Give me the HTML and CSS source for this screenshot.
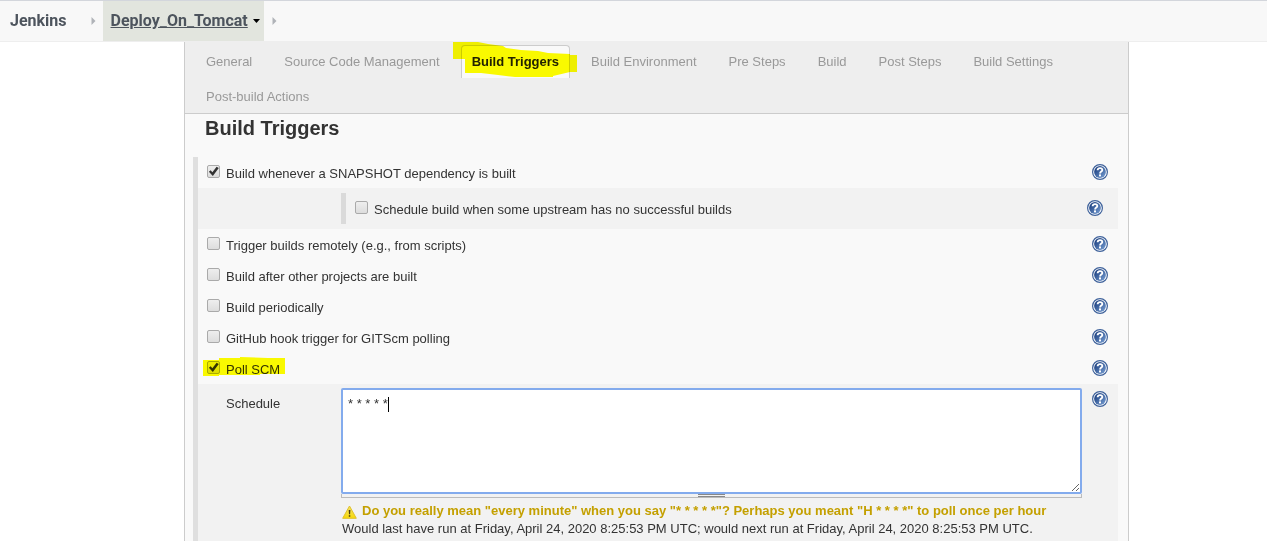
FILE: index.html
```html
<!DOCTYPE html>
<html lang="en">
<head>
<meta charset="utf-8">
<title>Deploy_On_Tomcat Config [Jenkins]</title>
<link rel="stylesheet" href="styles.css">
</head>
<body>
<svg class="defs" width="0" height="0" aria-hidden="true">
  <defs>
    <linearGradient id="help-fill" x1="0" y1="0" x2="1" y2="1">
      <stop offset="0.15" stop-color="#1f4383"/>
      <stop offset="1" stop-color="#7ba2d6"/>
    </linearGradient>
    <linearGradient id="warn-fill" x1="0" y1="0" x2="0" y2="1">
      <stop offset="0" stop-color="#f3e36a"/>
      <stop offset="1" stop-color="#f7d908"/>
    </linearGradient>
    <symbol id="help" viewBox="0 0 16 16">
      <circle cx="8" cy="8" r="7.4" fill="#fff" stroke="#3f629b" stroke-width="1.2"/>
      <circle cx="8" cy="8" r="5.9" fill="url(#help-fill)"/>
      <path d="M5.6 6.2C5.8 3.5 10.3 3.5 10.3 5.9C10.3 7.5 8.1 7.6 8.1 9.4" fill="none" stroke="#fff" stroke-width="1.9"/>
      <rect x="7" y="10.4" width="2" height="2" fill="#fff"/>
    </symbol>
  </defs>
</svg>
<header class="breadcrumbs">
  <a class="crumb" href="#">Jenkins</a>
  <svg class="sep" viewBox="0 0 5 8" aria-hidden="true"><path d="M0.5 0L4.5 4L0.5 8Z"/></svg>
  <a class="crumb crumb-active" href="#"><span class="crumb-text">Deploy_On_Tomcat</span><svg class="caret-down" viewBox="0 0 7 4" aria-hidden="true"><path d="M0 0H7L3.5 4Z"/></svg></a>
  <svg class="sep" viewBox="0 0 5 8" aria-hidden="true"><path d="M0.5 0L4.5 4L0.5 8Z"/></svg>
</header>
<main class="panel">
  <nav class="tabs">
    <a class="tab" href="#">General</a>
    <a class="tab" href="#">Source Code Management</a>
    <a class="tab tab-active" href="#">Build Triggers<svg class="marker marker-tab" viewBox="0 0 124 37" aria-hidden="true"><path d="M0 0H25L35 2L50 4L53 6L68 8L85 9L95 11L117 12V13H124V30H117L100 34V35H62L45 33L28 31H12V17H0Z"/></svg></a>
    <a class="tab" href="#">Build Environment</a>
    <a class="tab" href="#">Pre Steps</a>
    <a class="tab" href="#">Build</a>
    <a class="tab" href="#">Post Steps</a>
    <a class="tab" href="#">Build Settings</a>
    <a class="tab" href="#">Post-build Actions</a>
  </nav>
  <h1 class="title">Build Triggers</h1>
  <section class="group">
    <div class="row"><input type="checkbox" id="snapshot" checked><label for="snapshot">Build whenever a SNAPSHOT dependency is built</label><button class="help" aria-label="Help"><svg><use href="#help"/></svg></button></div>
    <div class="shade nested">
      <div class="row"><input type="checkbox" id="upstream"><label for="upstream">Schedule build when some upstream has no successful builds</label><button class="help" aria-label="Help"><svg><use href="#help"/></svg></button></div>
    </div>
    <div class="row"><input type="checkbox" id="remote"><label for="remote">Trigger builds remotely (e.g., from scripts)</label><button class="help" aria-label="Help"><svg><use href="#help"/></svg></button></div>
    <div class="row"><input type="checkbox" id="after"><label for="after">Build after other projects are built</label><button class="help" aria-label="Help"><svg><use href="#help"/></svg></button></div>
    <div class="row"><input type="checkbox" id="periodic"><label for="periodic">Build periodically</label><button class="help" aria-label="Help"><svg><use href="#help"/></svg></button></div>
    <div class="row"><input type="checkbox" id="github"><label for="github">GitHub hook trigger for GITScm polling</label><button class="help" aria-label="Help"><svg><use href="#help"/></svg></button></div>
    <div class="row"><input type="checkbox" id="poll" checked><label for="poll">Poll SCM</label><svg class="marker marker-poll" viewBox="0 0 82 20" aria-hidden="true"><path d="M0 3H16V1H37V0L65 1H82V17H57V18H16V19H0Z"/></svg><button class="help" aria-label="Help"><svg><use href="#help"/></svg></button></div>
    <div class="shade schedule">
      <label class="schedule-label" for="spec">Schedule</label>
      <div class="field">
        <div class="editor"><textarea id="spec" spellcheck="false">* * * * *</textarea><span class="text-cursor"></span></div>
        <div class="handle"><span class="grip"></span></div>
        <p class="warning"><svg class="warn-icon" viewBox="0 0 15 14" aria-hidden="true"><path d="M7.5 1L14.3 13.3H0.7Z" fill="url(#warn-fill)" stroke="#dfc02a" stroke-linejoin="round"/><path d="M6.7 5H8.4L8.1 9.3H7Z M6.8 10.2H8.3V11.7H6.8Z" fill="#4b3d10"/></svg>Do you really mean "every minute" when you say "* * * * *"? Perhaps you meant "H * * * *" to poll once per hour</p>
        <p class="info">Would last have run at Friday, April 24, 2020 8:25:53 PM UTC; would next run at Friday, April 24, 2020 8:25:53 PM UTC.</p>
      </div>
      <button class="help" aria-label="Help"><svg><use href="#help"/></svg></button>
    </div>
  </section>
</main>
</body>
</html>
```

FILE: styles.css
```css
* { box-sizing: border-box; }

body {
  margin: 0;
  min-height: 100vh;
  display: flex;
  flex-direction: column;
  background: #fff;
  color: #333;
  font: 13px/18px "Liberation Sans", Arial, sans-serif;
}

.defs { position: absolute; }

.breadcrumbs {
  display: flex;
  align-items: center;
  height: 42px;
  border-top: 1px solid #d3d6dc;
  border-bottom: 1px solid #eee;
  background: #f8f8f8;
}

.crumb {
  display: flex;
  align-items: center;
  align-self: stretch;
  padding: 0 24px 0 10px;
  color: #4d545d;
  font: bold 16px/20px Roboto, sans-serif;
  text-decoration: none;
}

.crumb-active {
  gap: 5px;
  margin: 0 8px 0 7px;
  padding: 0 4px 0 8px;
  background: #e2e5de;
}

.crumb-text { text-decoration: underline; }
.caret-down { width: 7px; height: 4px; fill: #000; }
.sep { width: 5px; height: 8px; fill: #b0b3b8; }

.panel {
  flex: 1;
  margin: 0 138px 0 184px;
  border: solid #ccc;
  border-width: 0 1px;
  background: #f9f9f9;
}

.tabs {
  display: flex;
  flex-wrap: wrap;
  column-gap: 10px;
  padding: 1px 60px 0 10px;
  border-bottom: 1px solid #ccc;
  background: #eee;
}

.tab {
  margin-top: 2px;
  height: 33px;
  padding: 0 10px;
  border: 1px solid transparent;
  border-bottom: 0;
  border-radius: 4px 4px 0 0;
  color: #999;
  line-height: 32px;
  text-decoration: none;
}

.tab-active {
  position: relative;
  border-color: #ccc;
  background: #f9f9f9;
  color: #222;
  font-weight: bold;
}

.marker {
  position: absolute;
  fill: #ff0;
  mix-blend-mode: multiply;
  pointer-events: none;
}

.marker-tab { left: -9px; top: -4px; width: 124px; height: 37px; }
.marker-poll { left: 5px; top: 4px; width: 82px; height: 20px; }

.title {
  margin: 0;
  padding: 2px 20px 17px;
  font-size: 20px;
  line-height: 24px;
}

.group {
  margin: 0 10px 0 8px;
  border-left: 5px solid #dfdfdf;
}

.row {
  position: relative;
  display: flex;
  align-items: flex-start;
  height: 31px;
  padding: 7px 10px 0 9px;
}

.row label { margin-left: 6px; line-height: 20px; }

input[type="checkbox"] {
  appearance: none;
  width: 13px;
  height: 13px;
  margin: 1px 0 0;
  border: 1px solid #aaa;
  border-radius: 2px;
  background: linear-gradient(#eee, #ddd);
}

input[type="checkbox"]:checked::after {
  content: "";
  display: block;
  width: 11px;
  height: 11px;
  background: #333;
  clip-path: polygon(8% 52%, 24% 38%, 40% 56%, 78% 6%, 98% 18%, 44% 92%);
}

.help {
  flex: none;
  width: 16px;
  height: 16px;
  margin-left: auto;
  padding: 0;
  border: 0;
  background: none;
}

.help svg { display: block; width: 16px; height: 16px; }

.shade { background: #f2f2f2; }

.nested { padding: 5px 5px 5px 143px; }
.nested .row { border-left: 5px solid #dadada; }

.schedule {
  display: flex;
  align-items: flex-start;
  gap: 10px;
  padding: 4px 10px 4px 28px;
}

.schedule-label { width: 105px; padding-top: 7px; }
.schedule .help { margin-top: 3px; }
.field { flex: 1; }
.editor { position: relative; }

textarea {
  display: block;
  width: 100%;
  height: 106px;
  padding: 5px;
  border: 2px solid #83abed;
  border-radius: 2px;
  outline: 0;
  background: #fff;
  color: #333;
  font: inherit;
  resize: vertical;
}

.text-cursor {
  position: absolute;
  left: 47px;
  top: 9px;
  width: 1px;
  height: 15px;
  background: #000;
}

.handle {
  display: flex;
  justify-content: center;
  height: 4px;
  border: 1px solid #bbb;
  border-top: 0;
}

.grip {
  width: 27px;
  height: 3px;
  border: solid #888;
  border-width: 1px 0;
}

.warning, .info { margin: 0 0 0 1px; white-space: nowrap; }

.warning {
  display: flex;
  gap: 5px;
  margin-top: 4px;
  color: #c4a000;
  font-weight: bold;
}

.warn-icon { width: 15px; height: 14px; margin-top: 3px; }
```
